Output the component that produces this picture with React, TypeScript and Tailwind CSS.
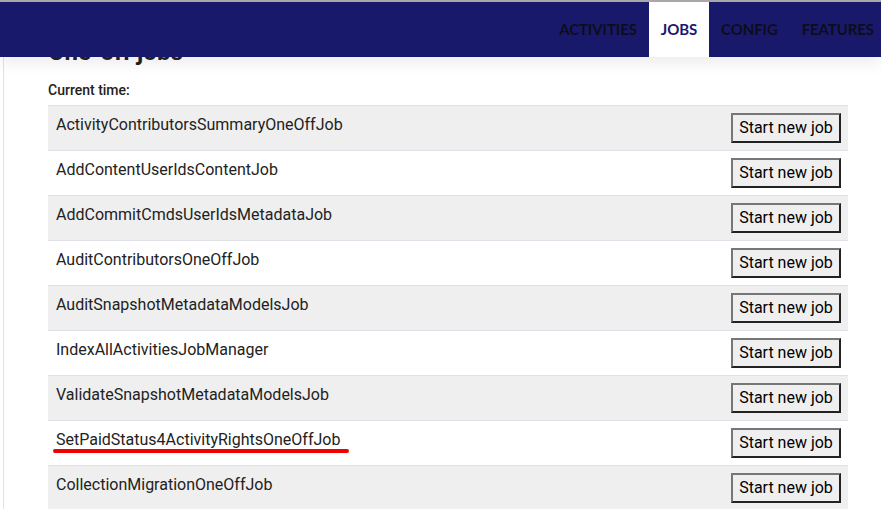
const jobs = [
  "ActivityContributorsSummaryOneOffJob",
  "AddContentUserIdsContentJob",
  "AddCommitCmdsUserIdsMetadataJob",
  "AuditContributorsOneOffJob",
  "AuditSnapshotMetadataModelsJob",
  "IndexAllActivitiesJobManager",
  "ValidateSnapshotMetadataModelsJob",
  "SetPaidStatus4ActivityRightsOneOffJob",
  "CollectionMigrationOneOffJob",
];

const tabs = ["ACTIVITIES", "JOBS", "CONFIG", "FEATURES"];

export default function App() {
  return (
    <div className="relative w-[881px] h-[509px] overflow-hidden bg-white font-['Roboto',sans-serif] text-[#222]">
      {/* top nav sits over the scrolled page */}
      <div className="absolute top-0 left-0 right-0 z-10 border-t-2 border-[#a8a8a8] bg-[#19196b] h-[57px] flex justify-end pr-[7px] shadow-[0_6px_14px_rgba(0,0,0,0.08)]">
        {tabs.map((t, i) => (
          <div
            key={t}
            className={
              (t === "JOBS"
                ? "bg-white text-[#19196b] "
                : "text-[#0d0d1a] ") +
              (i === tabs.length - 1 ? "pl-[12px] " : "px-[12px] ") +
              "h-full flex items-center font-['Lato',sans-serif] font-bold text-[15px] tracking-[-0.1px]"
            }
          >
            {t}
          </div>
        ))}
      </div>

      <div className="ml-[3px] h-full border-l border-[#e2e2e2] pl-[44px] pr-[32px]">
        <h1 className="pt-[36px] text-[24px] leading-[32px] font-bold text-[#222]">One-off jobs</h1>
        <div className="mt-[12px] text-[14px] leading-[20px] font-medium">Current time:</div>
        <div className="mt-[5px] w-[800px] border-t border-[#e0e0e8]">
          {jobs.map((job, i) => (
            <div
              key={job}
              className={
                (i % 2 === 0 ? "bg-[#efefef] " : "bg-white ") +
                "relative h-[45px] border-b border-[#e0e0e8] flex items-center justify-between pl-[8px] pr-[7px]"
              }
            >
              <span className="text-[16px] leading-[20px] -mt-[7px]">{job}</span>
              <button className="h-[30px] w-[110px] bg-[#efefef] text-[16px] text-black border-2 border-t-[#767676] border-l-[#767676] border-r-[#222] border-b-[#222]">
                Start new job
              </button>
              {job === "SetPaidStatus4ActivityRightsOneOffJob" && (
                <div className="absolute left-[5px] top-[28px] w-[296px] h-[4px] rounded-full bg-[#f20000]" />
              )}
            </div>
          ))}
        </div>
      </div>
    </div>
  );
}
